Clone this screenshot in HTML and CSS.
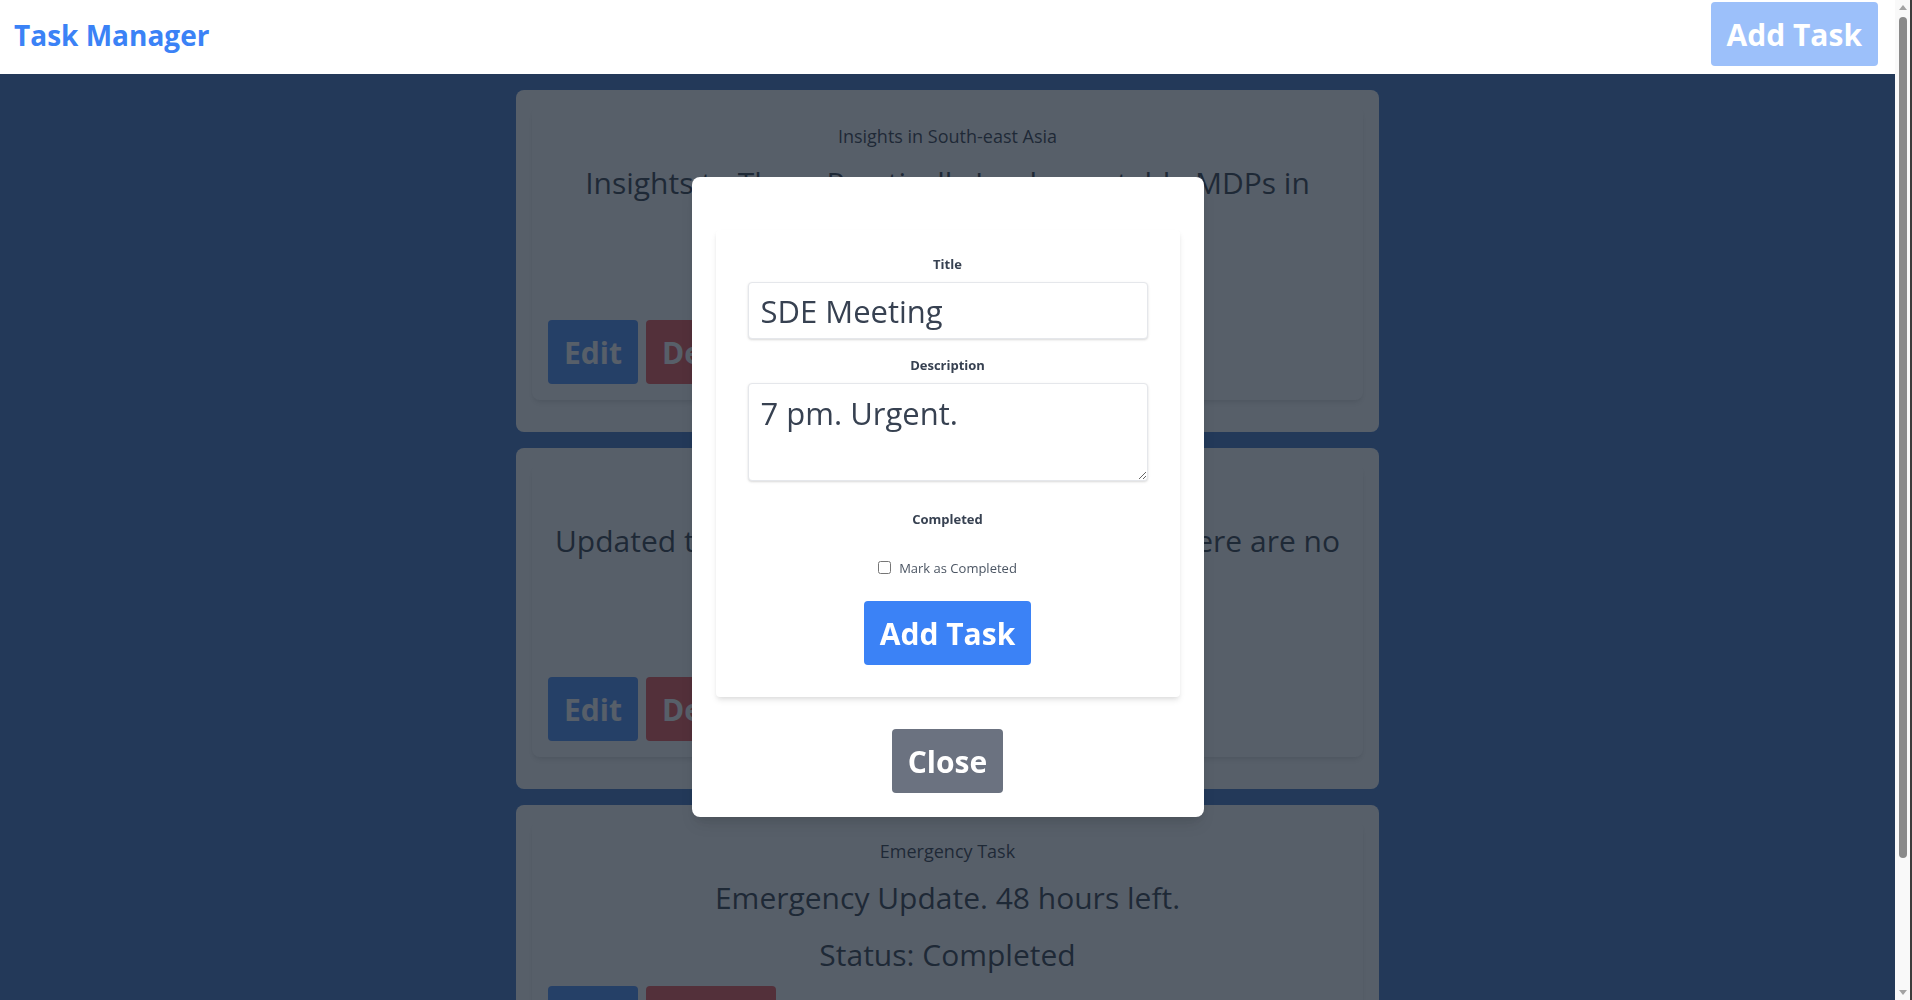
FILE: index.html
```html
<!DOCTYPE html>
<html lang="en">
<head>
<meta charset="utf-8">
<title>Task Manager</title>
<link rel="stylesheet" href="styles.css">
</head>
<body>
<header class="topbar">
  <h1 class="brand">Task Manager</h1>
  <button class="btn btn-primary btn-faded" type="button">Add Task</button>
</header>

<main class="tasks">
  <article class="task">
    <div class="task-body">
      <h2 class="task-title">Insights in South-east Asia</h2>
      <p class="task-desc">Insights to Three Practically Implementable MDPs in Southeast Asia.</p>
      <p class="task-status">Status: Pending</p>
      <div class="task-actions">
        <button class="btn btn-primary" type="button">Edit</button>
        <button class="btn btn-danger" type="button">Delete</button>
      </div>
    </div>
  </article>

  <article class="task">
    <div class="task-body">
      <h2 class="task-title">Project Update</h2>
      <p class="task-desc">Updated the client about the new deadline; there are no further changes.</p>
      <p class="task-status">Status: Pending</p>
      <div class="task-actions">
        <button class="btn btn-primary" type="button">Edit</button>
        <button class="btn btn-danger" type="button">Delete</button>
      </div>
    </div>
  </article>

  <article class="task">
    <div class="task-body">
      <h2 class="task-title">Emergency Task</h2>
      <p class="task-desc">Emergency Update. 48 hours left.</p>
      <p class="task-status">Status: Completed</p>
      <div class="task-actions">
        <button class="btn btn-primary" type="button">Edit</button>
        <button class="btn btn-danger" type="button">Delete</button>
      </div>
    </div>
  </article>
</main>

<div class="overlay">
  <div class="modal">
    <form class="task-form">
      <label class="field-label" for="title">Title</label>
      <input class="field-input" id="title" type="text" value="SDE Meeting">
      <label class="field-label" for="desc">Description</label>
      <textarea class="field-input field-area" id="desc" rows="2">7 pm. Urgent.</textarea>
      <span class="field-label">Completed</span>
      <label class="check-row"><input class="check" type="checkbox"> Mark as Completed</label>
      <button class="btn btn-primary" type="button">Add Task</button>
    </form>
    <div class="modal-foot">
      <button class="btn btn-muted" type="button">Close</button>
    </div>
  </div>
</div>

<div class="scrollbar" aria-hidden="true">
  <span class="sb-arrow sb-up"></span>
  <span class="sb-track"><span class="sb-thumb"></span></span>
  <span class="sb-arrow sb-down"></span>
</div>
</body>
</html>
```

FILE: styles.css
```css
html, body {
  margin: 0;
}
body {
  font-family: "Open Sans", "Noto Sans", sans-serif;
  background: #3069bf;
  color: #1f2937;
  padding-right: 17px;
}

.topbar {
  position: relative;
  z-index: 60;
  height: 74px;
  box-sizing: border-box;
  background: #ffffff;
  display: flex;
  justify-content: space-between;
  align-items: flex-start;
  padding: 2px 17px 0 14px;
}
.brand {
  margin: 11px 0 0;
  font-size: 28px;
  line-height: 45px;
  font-weight: 700;
  color: #3b82f6;
}

.btn {
  font-family: inherit;
  font-size: 30px;
  font-weight: 700;
  line-height: 48px;
  padding: 9px 16px 7px;
  border: 0;
  border-radius: 4px;
  color: #ffffff;
  cursor: pointer;
}
.btn-primary { background: #3b82f6; }
.btn-faded { opacity: 0.5; }
.btn-danger { background: #ef4444; }
.btn-muted { background: #6b7280; }

.tasks {
  width: 863px;
  margin: 0 auto;
  padding: 16px 0 40px;
  display: flex;
  flex-direction: column;
  gap: 16px;
}
.task {
  background: #ffffff;
  border-radius: 8px;
  padding: 16px 16px 32px;
}
.task-body {
  background: #ffffff;
  border-radius: 8px;
  box-shadow: 0 4px 6px -1px rgba(0,0,0,0.1), 0 2px 4px -1px rgba(0,0,0,0.06);
  padding: 16px;
  text-align: center;
}
.task-title {
  margin: 0;
  font-size: 18px;
  line-height: 29.25px;
  font-weight: 400;
}
.task-desc,
.task-status {
  margin: 8px 0 0;
  font-size: 30px;
  line-height: 48.75px;
}
.task-actions {
  margin-top: 6px;
  display: flex;
  gap: 8px;
}

.overlay {
  position: fixed;
  top: 0;
  left: 0;
  bottom: 0;
  right: 17px;
  z-index: 50;
  background: rgba(31, 41, 55, 0.75);
  display: flex;
  align-items: center;
  justify-content: center;
}
.modal {
  width: 512px;
  box-sizing: border-box;
  margin-bottom: 7px;
  background: #ffffff;
  border-radius: 8px;
  padding: 53px 24px 24px;
  box-shadow: 0 10px 15px -3px rgba(0,0,0,0.1), 0 4px 6px -2px rgba(0,0,0,0.05);
}
.task-form {
  background: #ffffff;
  border-radius: 4px;
  box-shadow: 0 4px 6px -1px rgba(0,0,0,0.1), 0 2px 4px -1px rgba(0,0,0,0.06);
  padding: 24px 32px 32px;
  text-align: center;
}
.field-label {
  display: block;
  font-size: 13px;
  line-height: 20px;
  font-weight: 700;
  color: #374151;
  margin-bottom: 8px;
}
.field-input {
  display: block;
  width: 100%;
  box-sizing: border-box;
  margin: 0 0 16px;
  padding: 9px 12px 7px;
  border: 1px solid #e5e7eb;
  border-radius: 4px;
  box-shadow: 0 1px 3px 0 rgba(0,0,0,0.1), 0 1px 2px 0 rgba(0,0,0,0.06);
  font-family: inherit;
  font-size: 31px;
  line-height: 39px;
  color: #374151;
  background: #ffffff;
  text-align: left;
}
.field-area {
  height: 98px;
  line-height: 40px;
  margin-bottom: 28px;
  resize: vertical;
}
.check-row {
  display: flex;
  justify-content: center;
  align-items: center;
  gap: 8px;
  margin: 29px 0 23px;
  font-size: 13px;
  line-height: 20px;
  color: #4b5563;
}
.check {
  width: 13px;
  height: 13px;
  margin: 0;
}
.modal-foot {
  margin-top: 32px;
  text-align: center;
}

/* window scrollbar */
.scrollbar {
  position: fixed;
  top: 0;
  right: 0;
  bottom: 0;
  width: 15px;
  z-index: 70;
  background: #f9f9f9;
  border-right: 2px solid #3c3c3c;
  display: flex;
  flex-direction: column;
  align-items: center;
}
.sb-arrow {
  width: 0;
  height: 0;
  border-left: 4px solid transparent;
  border-right: 4px solid transparent;
  flex: none;
}
.sb-up {
  margin-top: 5px;
  border-bottom: 5px solid #a3a3a3;
}
.sb-down {
  margin-bottom: 5px;
  border-top: 5px solid #a3a3a3;
}
.sb-track {
  flex: 1;
  width: 100%;
  display: flex;
  justify-content: center;
  padding: 7px 0 132px;
  box-sizing: border-box;
}
.sb-thumb {
  width: 8px;
  border-radius: 4px;
  background: #8a8a8a;
}
```
